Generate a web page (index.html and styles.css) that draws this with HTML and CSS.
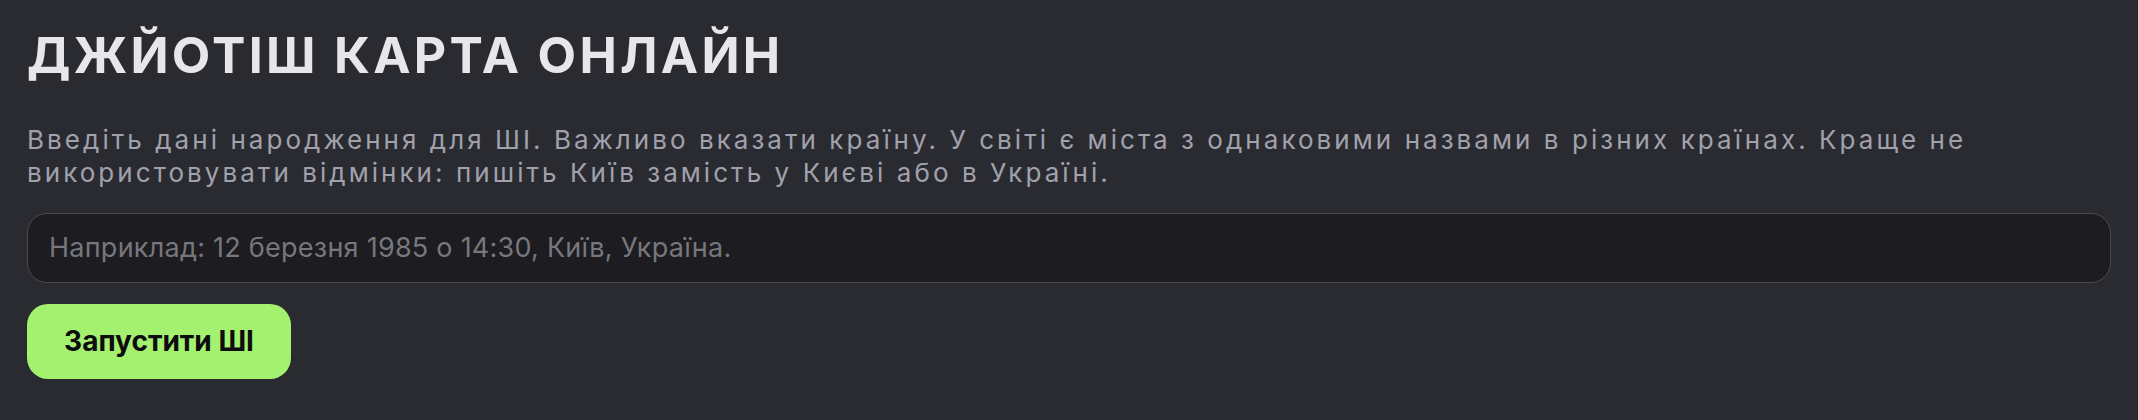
FILE: index.html
```html
<!DOCTYPE html>
<html lang="uk">
<head>
<meta charset="utf-8">
<title>Джйотіш карта онлайн</title>
<link rel="stylesheet" href="styles.css">
</head>
<body>
<main class="page">
  <h1 class="title">ДЖЙОТІШ КАРТА ОНЛАЙН</h1>
  <p class="intro">Введіть дані народження для ШІ. Важливо вказати країну. У світі є міста з однаковими назвами в різних країнах. Краще не використовувати відмінки: пишіть Київ замість у Києві або в Україні.</p>
  <input class="birth-input" type="text" placeholder="Наприклад: 12 березня 1985 о 14:30, Київ, Україна.">
  <div class="actions">
    <button class="run-btn" type="button">Запустити ШІ</button>
  </div>
</main>
</body>
</html>
```
FILE: styles.css
```css
html, body {
  margin: 0;
  padding: 0;
  background: #2a2b31;
}
.page {
  padding: 25px 27px 0 27px;
  display: flex;
  flex-direction: column;
  font-family: Inter, "Noto Sans", sans-serif;
}
.title {
  margin: 0;
  font-size: 50px;
  line-height: 60px;
  font-weight: 700;
  letter-spacing: 0.066em;
  color: #e6e6eb;
}
.intro {
  margin: 38px 0 0 0;
  font-size: 26px;
  line-height: 33.4px;
  letter-spacing: 3.05px;
  color: #a1a1ad;
  max-width: 2060px;
}
.birth-input {
  margin-top: 23px;
  box-sizing: border-box;
  height: 70px;
  width: 100%;
  padding: 0 21px;
  border: 1.5px solid #4b4b51;
  border-radius: 20px;
  background: #1c1c21;
  font-family: Inter, "Noto Sans", sans-serif;
  font-size: 27px;
  letter-spacing: 0.25px;
  color: #e6e6eb;
  outline: none;
}
.birth-input::placeholder {
  color: #77777d;
}
.actions {
  margin-top: 21px;
  display: flex;
}
.run-btn {
  box-sizing: border-box;
  height: 75px;
  width: 264px;
  border: none;
  border-radius: 21px;
  background: #a4f06f;
  color: #0d0d0f;
  font-family: Inter, "Noto Sans", sans-serif;
  font-size: 28px;
  font-weight: 700;
  cursor: pointer;
}
```
